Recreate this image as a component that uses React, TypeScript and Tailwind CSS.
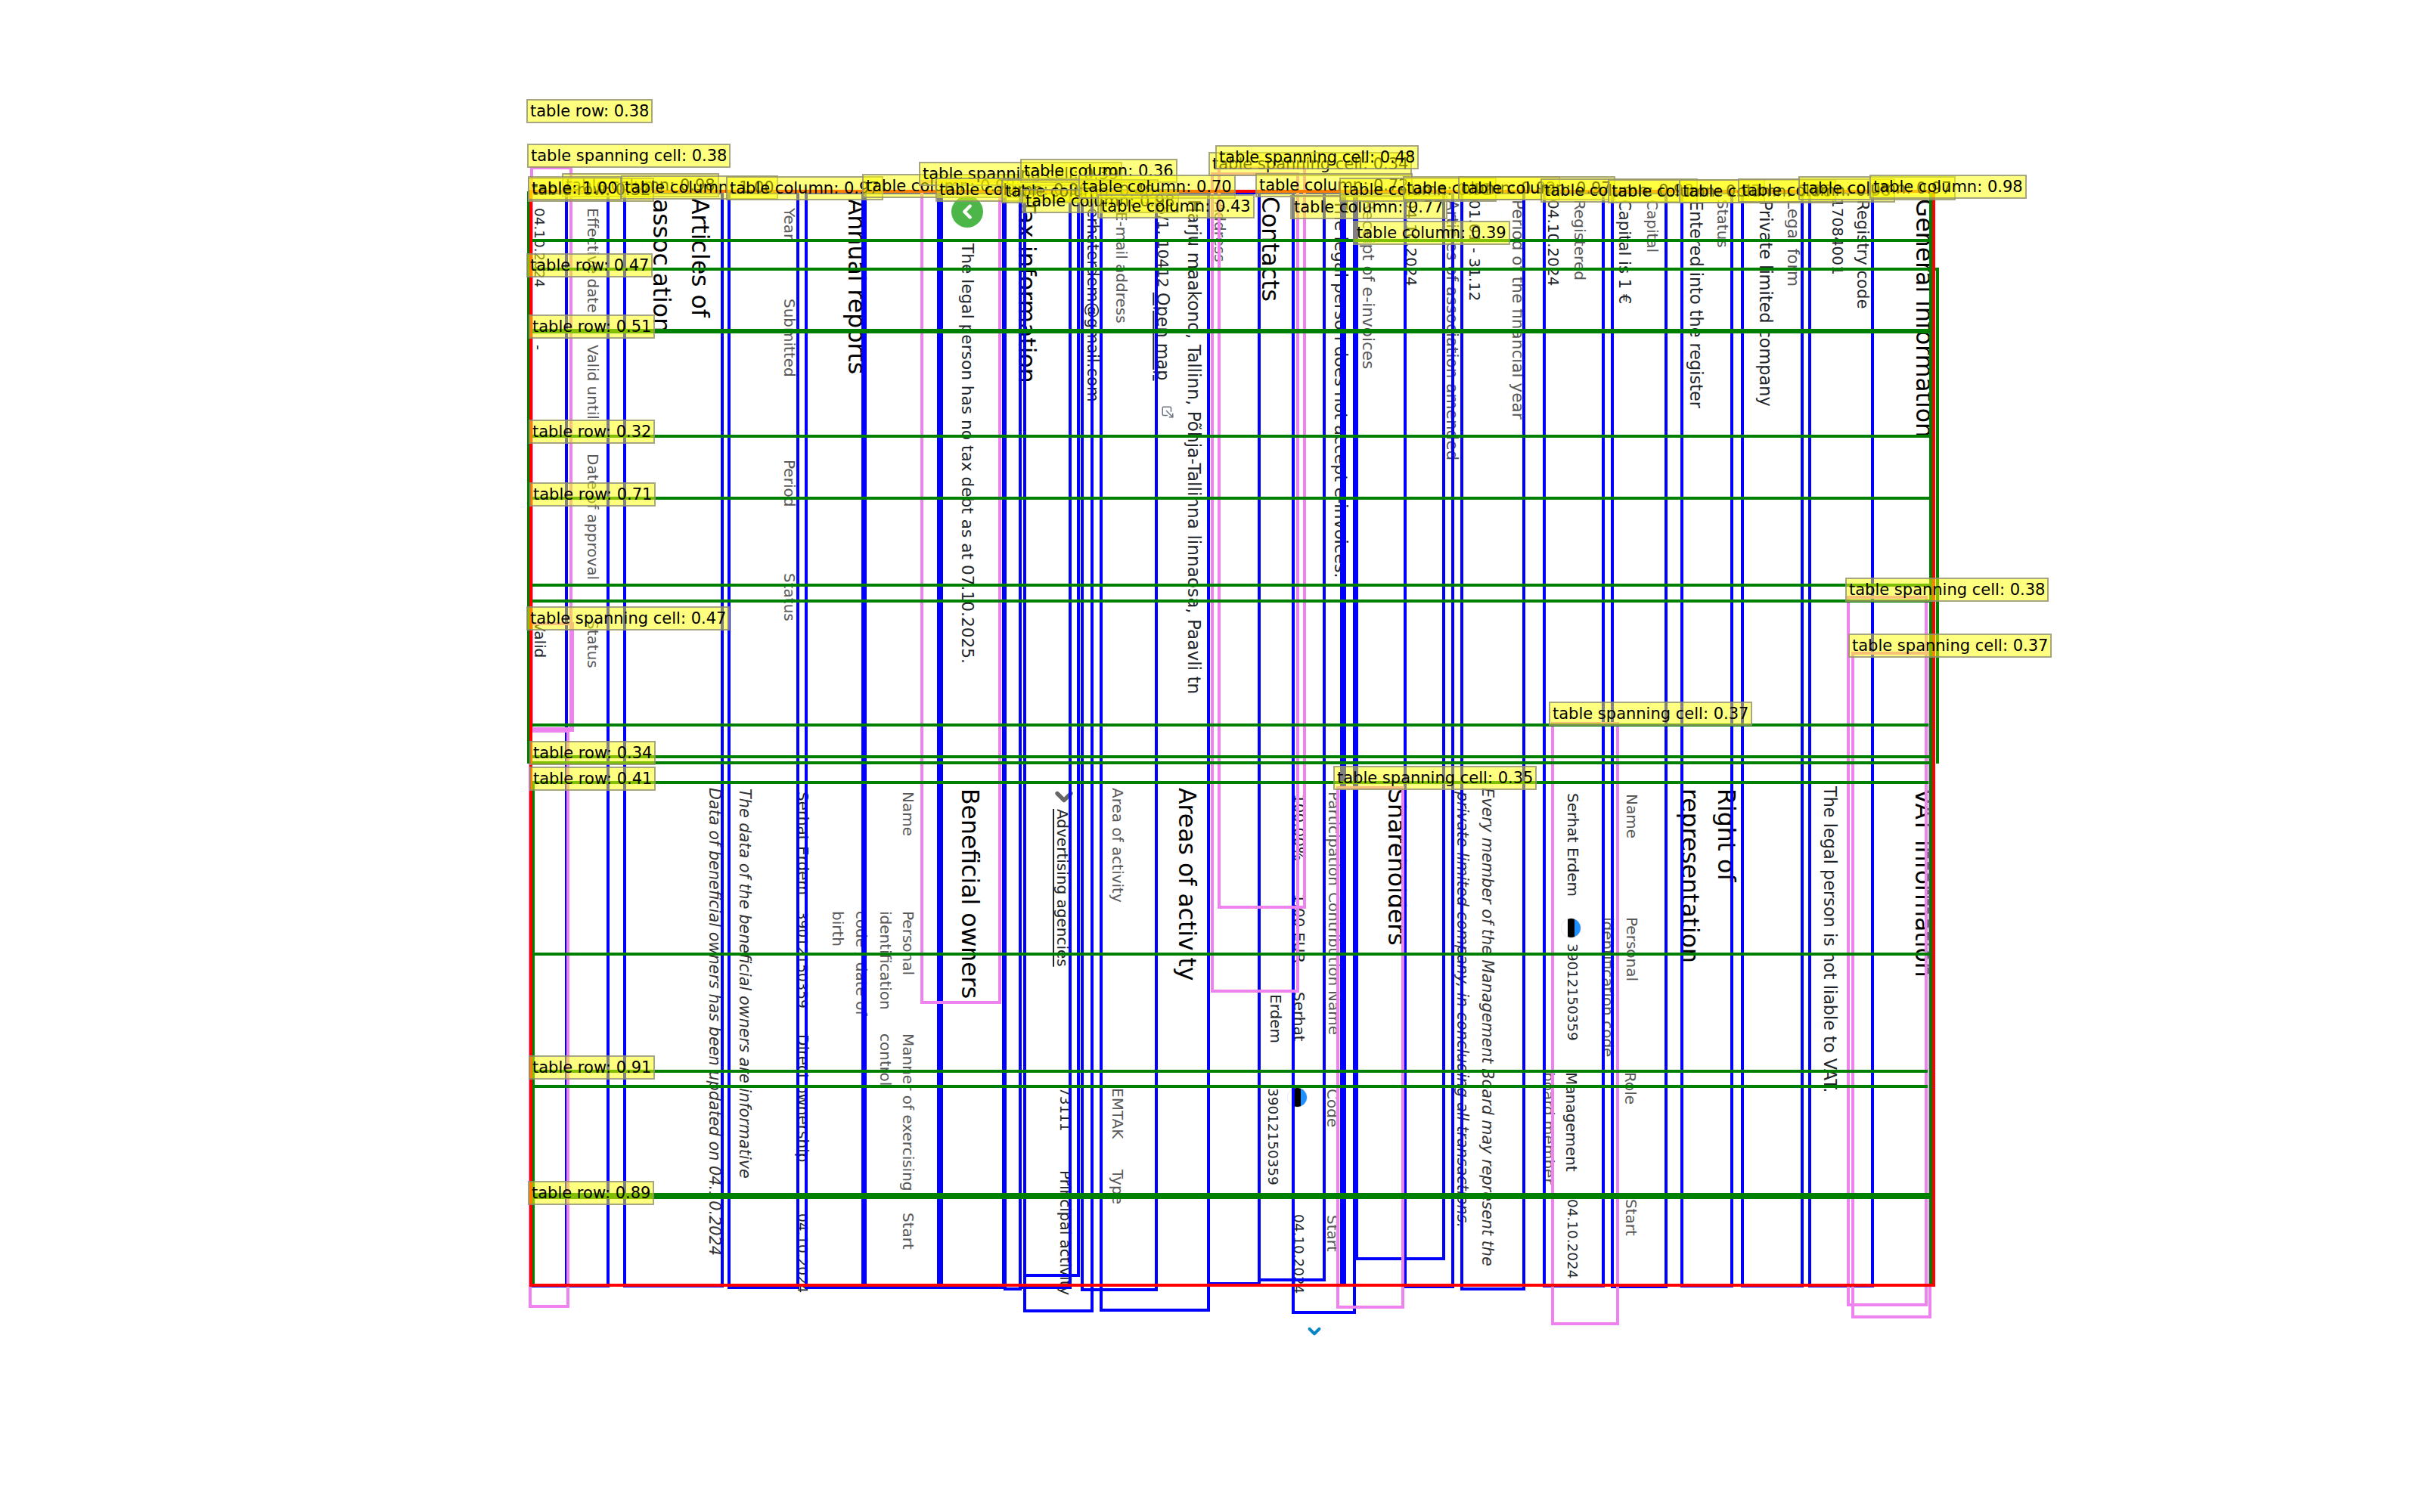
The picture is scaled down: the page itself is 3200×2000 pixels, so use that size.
import { ChevronDown, ChevronLeft, ExternalLink } from "lucide-react"

type Kind = "h" | "a" | "b" | "c" | "m" | "v" | "d" | "k" | "l" | "i"
type Txt = [string, number, number, Kind, string?]

// [text, x centre, top, kind]
const texts: Txt[] = [
  ["04.10.2024", 715, 275, "d"],
  ["-", 713, 456, "v"],
  ["Valid", 715, 822, "v"],
  ["Effective date", 785, 275, "l"],
  ["Valid until", 785, 456, "l"],
  ["Date of approval", 785, 600, "l"],
  ["Status", 785, 820, "l"],
  ["association", 874, 263, "h"],
  ["Articles of", 925, 262, "h"],
  ["Year", 1045, 275, "l"],
  ["Submitted", 1045, 395, "l"],
  ["Period", 1045, 608, "l"],
  ["Status", 1045, 758, "l"],
  ["Annual reports", 1132, 263, "h"],
  ["The legal person has no tax debt as at 07.10.2025.", 1279, 322, "c"],
  ["Tax information", 1357, 263, "h"],
  ["serhaterdem@gmail.com", 1446, 264, "m"],
  ["E-mail address", 1484, 280, "l"],
  ["Harju maakond, Tallinn, Põhja-Tallinna linnaosa, Paavli tn", 1579, 264, "a"],
  ["Address", 1614, 267, "l"],
  ["Contacts", 1679, 260, "h"],
  ["The legal person does not accept e-invoices.", 1773, 264, "b"],
  ["Receipt of e-invoices", 1809, 264, "k"],
  ["04.10.2024", 1867, 264, "v"],
  ["Articles of association amended", 1920, 264, "k"],
  ["01.01 - 31.12", 1951, 264, "v"],
  ["Period of the financial year", 2007, 264, "k"],
  ["04.10.2024", 2055, 264, "v"],
  ["Registered", 2090, 264, "l"],
  ["Capital is 1 €", 2149, 264, "m"],
  ["Capital", 2186, 264, "l"],
  ["Entered into the register", 2243, 265, "b"],
  ["Status", 2279, 264, "l"],
  ["Private limited company", 2335, 265, "b"],
  ["Legal form", 2371, 264, "k"],
  ["17084001", 2431, 262, "v"],
  ["Registry code", 2464, 264, "m"],
  ["General information", 2544, 263, "h"],

  ["Data of beneficial owners has been updated on 04.10.2024", 945, 1042, "i"],
  ["The data of the beneficial owners are informative", 985, 1043, "i"],
  ["Serhat Erdem", 1063, 1047, "v"],
  ["39012150359", 1063, 1205, "d"],
  ["Direct ownership", 1063, 1368, "v"],
  ["04.10.2024", 1063, 1605, "d"],
  ["birth", 1109, 1205, "l"],
  ["code / date of", 1140, 1205, "l"],
  ["identification", 1172, 1205, "l"],
  ["control", 1172, 1367, "l"],
  ["Name", 1202, 1047, "l"],
  ["Personal", 1202, 1205, "l"],
  ["Manner of exercising", 1202, 1367, "l"],
  ["Start", 1202, 1604, "l"],
  ["Beneficial owners", 1282, 1043, "h"],
  ["Advertising agencies", 1406, 1070, "v", "underline"],
  ["73111", 1410, 1438, "d"],
  ["Principal activity", 1410, 1548, "v"],
  ["Area of activity", 1479, 1042, "l"],
  ["EMTAK", 1479, 1439, "l"],
  ["Type", 1479, 1547, "l"],
  ["Areas of activity", 1569, 1042, "h"],
  ["Erdem", 1688, 1315, "v"],
  ["39012150359", 1685, 1439, "d"],
  ["100.00%", 1719, 1050, "v"],
  ["1.00 EUR", 1719, 1182, "v"],
  ["Serhat", 1719, 1312, "v"],
  ["04.10.2024", 1719, 1606, "d"],
  ["Participation", 1765, 1047, "l"],
  ["Contribution", 1765, 1180, "l"],
  ["Name", 1765, 1310, "l"],
  ["Code", 1763, 1440, "l"],
  ["Start", 1763, 1607, "l"],
  ["Shareholders", 1846, 1043, "h"],
  ["private limited company, in concluding all transactions.", 1934, 1047, "i"],
  ["Every member of the Management Board may represent the", 1967, 1042, "i"],
  ["board member", 2049, 1418, "l"],
  ["Serhat Erdem", 2081, 1049, "v"],
  ["39012150359", 2081, 1248, "d"],
  ["Management", 2079, 1418, "v"],
  ["04.10.2024", 2081, 1586, "d"],
  ["identification code", 2127, 1213, "l"],
  ["Name", 2159, 1050, "l"],
  ["Personal", 2159, 1213, "l"],
  ["Role", 2157, 1418, "l"],
  ["Start", 2158, 1586, "l"],
  ["representation", 2234, 1043, "h"],
  ["Right of", 2282, 1043, "h"],
  ["The legal person is not liable to VAT.", 2420, 1040, "b"],
  ["VAT information", 2543, 1043, "h"],
]

// table column boxes: [left, right, bottom]
const columns = [
  [702, 749, 1703], [749, 804, 1703], [826, 955, 1703], [964, 1055, 1705], [1066, 1141, 1705],
  [1144, 1241, 1705], [1245, 1327, 1705], [1329, 1349, 1707], [1349, 1415, 1705], [1355, 1426, 1689],
  [1355, 1444, 1736], [1431, 1529, 1708], [1456, 1598, 1735], [1598, 1665, 1700], [1665, 1751, 1695],
  [1710, 1791, 1738], [1774, 1777, 1700], [1794, 1909, 1667], [1858, 1921, 1704], [1933, 2015, 1707],
  [2042, 2120, 1703], [2132, 2203, 1704], [2224, 2290, 1703], [2304, 2383, 1703], [2393, 2476, 1703],
]

// spanning cell boxes: [left, right, top, bottom]
const spans = [
  [703, 755, 220, 966], [703, 757, 823, 968], [701, 751, 965, 1730], [1219, 1322, 238, 1328],
  [1603, 1716, 228, 1313], [1612, 1725, 220, 1202], [1769, 1855, 1040, 1731], [2053, 2139, 955, 1753],
  [2444, 2547, 788, 1728], [2450, 2552, 862, 1744],
]

// rows: [y, right end, thickness]
const rows = [
  [318, 2553, 4], [356, 2564, 4], [438, 2553, 6], [577, 2553, 4], [659, 2553, 4], [774, 2553, 4],
  [795, 2553, 4], [959, 2550, 4], [1001, 2555, 4], [1009, 2551, 4], [1035, 2550, 4], [1262, 2553, 4],
  [1417, 2549, 4], [1437, 2549, 4], [1582, 2555, 8],
]

// labels: [text, left, top]
const labels: [string, number, number][] = [
  ["table row: 0.38", 696, 131],
  ["table spanning cell: 0.38", 697, 190],
  ["table column: 0.98", 743, 229],
  ["table row: 0.32", 698, 235],
  ["table: 1.00", 698, 233],
  ["table column: 1.00", 821, 232],
  ["table column: 0.97", 960, 233],
  ["table column: 0.98", 1140, 230],
  ["table spanning cell: 0.39", 1215, 214],
  ["table column: 0.96", 1237, 235],
  ["table column: 0.36", 1349, 210],
  ["table column: 0.48", 1324, 237],
  ["table column: 0.98", 1351, 250],
  ["table column: 0.70", 1426, 231],
  ["table column: 0.43", 1451, 257],
  ["table spanning cell: 0.34", 1598, 201],
  ["table spanning cell: 0.48", 1607, 192],
  ["table column: 0.72", 1660, 229],
  ["table column: 0.77", 1706, 258],
  ["table column: 0.92", 1771, 235],
  ["table column: 0.39", 1789, 292],
  ["table column: 0.92", 1855, 233],
  ["table column: 0.97", 1928, 233],
  ["table column: 0.98", 2037, 236],
  ["table column: 0.97", 2126, 237],
  ["table column: 0.96", 2220, 237],
  ["table column: 0.98", 2298, 236],
  ["table column: 0.97", 2378, 233],
  ["table column: 0.98", 2472, 231],
  ["table row: 0.47", 696, 335],
  ["table row: 0.51", 699, 416],
  ["table row: 0.32", 699, 555],
  ["table row: 0.71", 700, 638],
  ["table spanning cell: 0.47", 696, 802],
  ["table row: 0.34", 700, 980],
  ["table row: 0.41", 700, 1014],
  ["table row: 0.91", 699, 1396],
  ["table row: 0.89", 698, 1562],
  ["table spanning cell: 0.35", 1763, 1013],
  ["table spanning cell: 0.37", 2048, 928],
  ["table spanning cell: 0.38", 2440, 764],
  ["table spanning cell: 0.37", 2444, 838],
]

function Flag({ x, y }: { x: number; y: number }) {
  return (
    <div
      className="absolute flex w-[27px] h-[27px] rounded-full overflow-hidden border border-[#e5e7eb]"
      style={{ left: x - 13, top: y - 13 }}
    >
      <div className="flex-1 bg-white" />
      <div className="flex-1 bg-black" />
      <div className="flex-1 bg-[#1e90ff]" />
    </div>
  )
}

export default function App() {
  const sizes: Record<Kind, string> = {
    h: "text-[31.5px] text-black",
    a: "text-[23.2px] text-[#212529]",
    b: "text-[22.4px] text-[#212529]",
    c: "text-[21.7px] text-[#212529]",
    m: "text-[21.2px] text-[#212529]",
    v: "text-[20px] text-[#212529]",
    d: "text-[18.4px] text-[#212529]",
    k: "text-[21.6px] text-[#595959]",
    l: "text-[20px] text-[#595959]",
    i: "text-[20.8px] text-[#333333] italic",
  }

  return (
    <div className="relative w-[3200px] h-[2000px] bg-white overflow-hidden font-['DejaVu_Sans',sans-serif]">
      {texts.map(([text, x, y, kind, extra], i) => (
        <span
          key={i}
          className={`absolute leading-none whitespace-nowrap [writing-mode:vertical-rl] ${sizes[kind]} ${extra === "underline" ? "underline" : ""}`}
          style={{ left: x - (kind === "h" ? 16 : 11), top: y }}
        >
          {text}
        </span>
      ))}

      <span className="absolute left-[1527px] top-[272px] leading-none whitespace-nowrap text-[20px] text-[#212529] [writing-mode:vertical-rl]">
        5/1, 10412 <span className="underline text-[22.4px]">Open map</span>
      </span>
      <ExternalLink className="absolute left-[1535px] top-[536px] w-[18px] h-[18px] rotate-90 text-[#6b7280]" />

      <div className="absolute left-[1258px] top-[259px] w-[42px] h-[42px] rounded-full bg-[#4cb648] flex items-center justify-center">
        <ChevronLeft className="w-[30px] h-[30px] text-white" strokeWidth={3.5} />
      </div>

      <Flag x={1715} y={1451} />
      <Flag x={2077} y={1227} />

      <ChevronDown className="absolute left-[1389px] top-[1036px] w-[36px] h-[36px] text-[#666666]" strokeWidth={3.6} />
      <ChevronDown className="absolute left-[1725px] top-[1748px] w-[26px] h-[26px] text-[#0a85c6]" strokeWidth={3.6} />

      {columns.map(([l, r, b], i) => (
        <div
          key={i}
          className="absolute border-[4px] border-[#0000ff]"
          style={{ left: l - 2, top: 253, width: r - l + 4, height: b - 253 }}
        />
      ))}

      {spans.map(([l, r, t, b], i) => (
        <div
          key={i}
          className="absolute border-[4px] border-[#ee82ee]"
          style={{ left: l - 2, top: t, width: r - l + 4, height: b - t }}
        />
      ))}

      {rows.map(([y, r, h], i) => (
        <div
          key={i}
          className="absolute left-[704px] bg-[#008000]"
          style={{ top: y - Math.floor(h / 2), width: r - 704, height: h }}
        />
      ))}
      <div className="absolute left-[697px] top-[253px] w-[3px] h-[757px] bg-[#008000]" />
      <div className="absolute left-[704px] top-[1035px] w-[3px] h-[665px] bg-[#008000]" />
      <div className="absolute left-[2551px] top-[253px] w-[4px] h-[1447px] bg-[#008000]" />
      <div className="absolute left-[2560px] top-[356px] w-[4px] h-[654px] bg-[#008000]" />

      <div className="absolute left-[700px] top-[251px] w-[1859px] h-[1451px] border-[4px] border-[#ff0000]" />

      {labels.map(([text, x, y], i) => (
        <div
          key={i}
          className="absolute h-[32px] px-[3px] leading-[28px] whitespace-nowrap text-[21px] text-black bg-[#ffff00]/50 border-2 border-[#808080]/70"
          style={{ left: x, top: y }}
        >
          {text}
        </div>
      ))}
    </div>
  )
}
